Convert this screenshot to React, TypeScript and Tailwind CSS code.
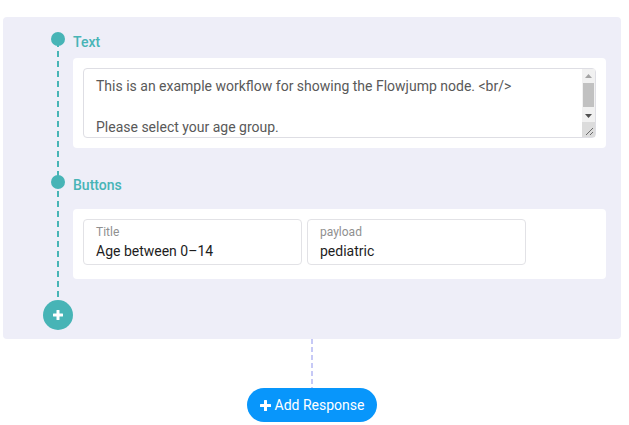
const TEAL = '#47b4b6';

function SectionHeader({ label }: { label: string }) {
  return (
    <div className="flex h-5 items-center gap-2 pl-[48px]">
      <span className="relative z-10 h-[14px] w-[14px] -translate-y-[3px] rounded-full bg-[#47b4b6]" />
      <span className="text-[14px] font-medium text-[#47b4b6]">{label}</span>
    </div>
  );
}

function Field({ label, value }: { label: string; value: string }) {
  return (
    <div className="flex h-[46px] w-[219px] flex-col justify-center rounded border border-[#e2e2e6] bg-white px-3 pt-[1px]">
      <span className="text-[12px] leading-[15px] text-[#909090]">{label}</span>
      <span className="mt-[2px] text-[14px] leading-[19px] text-[#1d1d1d]">{value}</span>
    </div>
  );
}

function PlusGlyph({ size, bar }: { size: number; bar: number }) {
  const o = (size - bar) / 2;
  return (
    <svg width={size} height={size} viewBox={`0 0 ${size} ${size}`} fill="currentColor">
      <rect x={o} y={0} width={bar} height={size} rx={0.5} />
      <rect x={0} y={o} width={size} height={bar} rx={0.5} />
    </svg>
  );
}

// drawn scrollbar lying over the textarea's right edge
function FakeScrollbar() {
  return (
    <div className="pointer-events-none absolute bottom-[11px] right-[11px] top-[11px] flex w-[13px] flex-col bg-[#f1f1f1]">
      <div className="flex h-[13px] items-center justify-center">
        <svg width="7" height="4" viewBox="0 0 7 4">
          <polygon points="0,4 7,4 3.5,0" fill="#a3a3a3" />
        </svg>
      </div>
      <div className="mx-[1px] mt-[1px] h-[24px] bg-[#c1c1c1]" />
      <div className="flex-1" />
      <div className="flex h-[13px] items-center justify-center">
        <svg width="7" height="4" viewBox="0 0 7 4">
          <polygon points="0,0 7,0 3.5,4" fill="#505050" />
        </svg>
      </div>
      <div className="relative h-[15px] bg-[#dcdcdc]">
        <svg className="absolute bottom-[2px] right-[2px]" width="8" height="8" viewBox="0 0 8 8">
          <line x1="8" y1="1" x2="1" y2="8" stroke="#6b6b6b" strokeWidth="1" />
          <line x1="8" y1="5" x2="5" y2="8" stroke="#6b6b6b" strokeWidth="1" />
        </svg>
      </div>
    </div>
  );
}

export default function App() {
  const text =
    'This is an example workflow for showing the Flowjump node. <br/>\n\nPlease select your age group.\n';

  return (
    <div className="min-h-screen bg-white pl-[3px] pr-[8px] pt-[17px] font-['Roboto',sans-serif]">
      <div className="relative rounded bg-[#eeeef8] pb-[9px] pt-[15px]">
        {/* timeline line */}
        <svg className="absolute left-[54px] top-[24px]" width="2" height="276">
          <line x1="1" y1="0" x2="1" y2="276" stroke={TEAL} strokeWidth="2" strokeDasharray="6 4" />
        </svg>

        <SectionHeader label="Text" />
        <div className="relative ml-[70px] mr-[15px] mt-[6px] rounded bg-white p-[10px]">
          <textarea
            readOnly
            defaultValue={text}
            className="block h-[70px] w-full resize-none overflow-hidden rounded border border-[#dedee4] pl-3 pr-[20px] pt-[7px] text-[14px] leading-[20.5px] text-[#595959] outline-none"
          />
          <FakeScrollbar />
        </div>

        <div className="mt-[27px]">
          <SectionHeader label="Buttons" />
        </div>
        <div className="ml-[70px] mr-[15px] mt-[14px] rounded bg-white px-[10px] pb-[14px] pt-[10px]">
          <div className="flex gap-[5px]">
            <Field label="Title" value="Age between 0–14" />
            <Field label="payload" value="pediatric" />
          </div>
        </div>

        <div className="mt-[21px] pl-[40px]">
          <div className="relative z-10 flex h-[30px] w-[30px] items-center justify-center rounded-full bg-[#47b4b6] text-white">
            <PlusGlyph size={10} bar={3} />
          </div>
        </div>
      </div>

      <div className="flex flex-col items-center">
        <svg width="2" height="49">
          <line x1="1" y1="0" x2="1" y2="49" stroke="#c6c9f6" strokeWidth="2" strokeDasharray="5 3" />
        </svg>
        <button
          type="button"
          className="flex h-[34px] w-[130px] items-center justify-center gap-[4px] rounded-full bg-[#0896fb] text-[14px] text-white"
        >
          <PlusGlyph size={11} bar={3} />
          Add Response
        </button>
      </div>
    </div>
  );
}
